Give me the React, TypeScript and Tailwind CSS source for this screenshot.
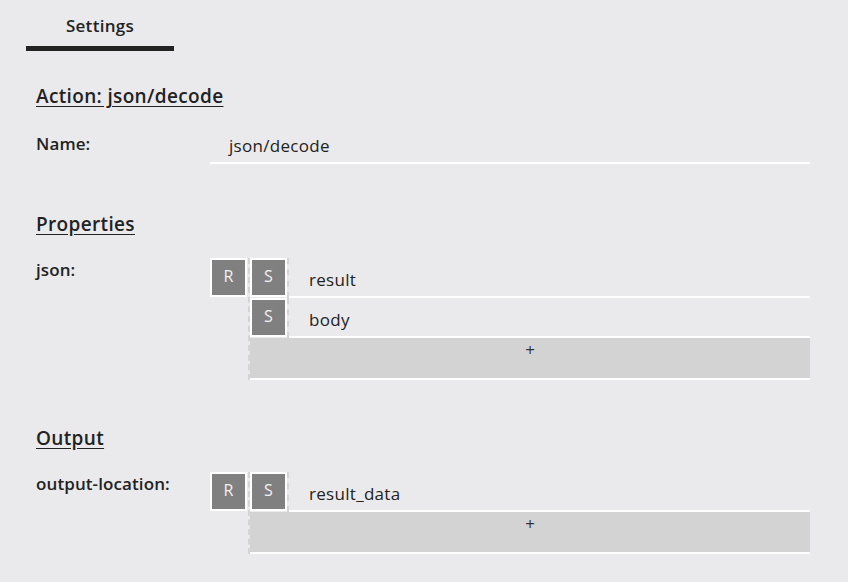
import React from "react"

const font = { fontFamily: "'Open Sans', 'Noto Sans', Arial, sans-serif" }

function TagBox({ letter }: { letter: string }) {
    return (
        <div className="w-[37px] h-[39px] flex-shrink-0 border-2 border-white bg-[#808080] flex items-center justify-center pb-[3px] text-[16px] font-normal text-[#f2f2f2]">
            {letter}
        </div>
    )
}

function ValueRow({ text }: { text: string }) {
    return (
        <div className="flex h-[40px]">
            <div className="border-r-2 border-dashed border-[#d4d4d6] flex-shrink-0">
                <TagBox letter="S" />
            </div>
            <div className="flex-1 border-b-2 border-white pl-[20px] pt-[10px] text-[17px] tracking-[0.3px] leading-[24px] text-[#222]">
                {text}
            </div>
        </div>
    )
}

function AddButton() {
    return (
        <button className="w-full h-[42px] bg-[#d3d3d3] border-b-2 border-white text-[17px] leading-[24px] text-[#333] pb-[16px]">
            +
        </button>
    )
}

function Field({
    label,
    values,
    showRef
}: {
    label: string
    values: string[]
    showRef?: boolean
}) {
    return (
        <div className="flex">
            <div className="w-[174px] flex-shrink-0 text-[17px] tracking-[0.1px] font-semibold leading-[24px] text-[#222]">{label}</div>
            <div className="flex flex-1">
                {showRef && <TagBox letter="R" />}
                <div className="flex-1 ml-px border-l-2 border-dashed border-[#d4d4d6]">
                    {values.map((v, idx) => (
                        <ValueRow key={idx} text={v} />
                    ))}
                    <AddButton />
                </div>
            </div>
        </div>
    )
}

function Heading({ children, className }: { children: React.ReactNode; className?: string }) {
    return (
        <div className={`text-[19px] tracking-[0.35px] font-semibold leading-[24px] text-[#222] underline underline-offset-[3px] ${className ?? ""}`}>
            {children}
        </div>
    )
}

export default function App() {
    return (
        <div className="w-full min-h-[582px] bg-[#eaeaec]" style={font}>
            {/* Tab bar */}
            <div className="pl-[26px] pt-[14px]">
                <div className="w-[148px]">
                    <div className="text-center text-[17px] tracking-[0.3px] font-semibold leading-[24px] text-[#222]">Settings</div>
                    <div className="mt-[8px] h-[5px] bg-[#222]" />
                </div>
            </div>

            <div className="pl-[36px] pr-[38px]">
                <Heading className="mt-[33px]">Action: json/decode</Heading>

                {/* Name */}
                <div className="flex mt-[22px]">
                    <div className="w-[174px] flex-shrink-0 mt-[2px] text-[17px] tracking-[0.1px] font-semibold leading-[24px] text-[#222]">Name:</div>
                    <div className="flex-1 h-[34px] border-b-2 border-white pl-[19px] pt-[4px] text-[17px] tracking-[0.3px] leading-[24px] text-[#222]">
                        json/decode
                    </div>
                </div>

                <Heading className="mt-[48px]">Properties</Heading>
                <div className="mt-[22px]">
                    <Field label="json:" values={["result", "body"]} showRef />
                </div>

                <Heading className="mt-[46px]">Output</Heading>
                <div className="mt-[22px]">
                    <Field label="output-location:" values={["result_data"]} showRef />
                </div>
            </div>
        </div>
    )
}
